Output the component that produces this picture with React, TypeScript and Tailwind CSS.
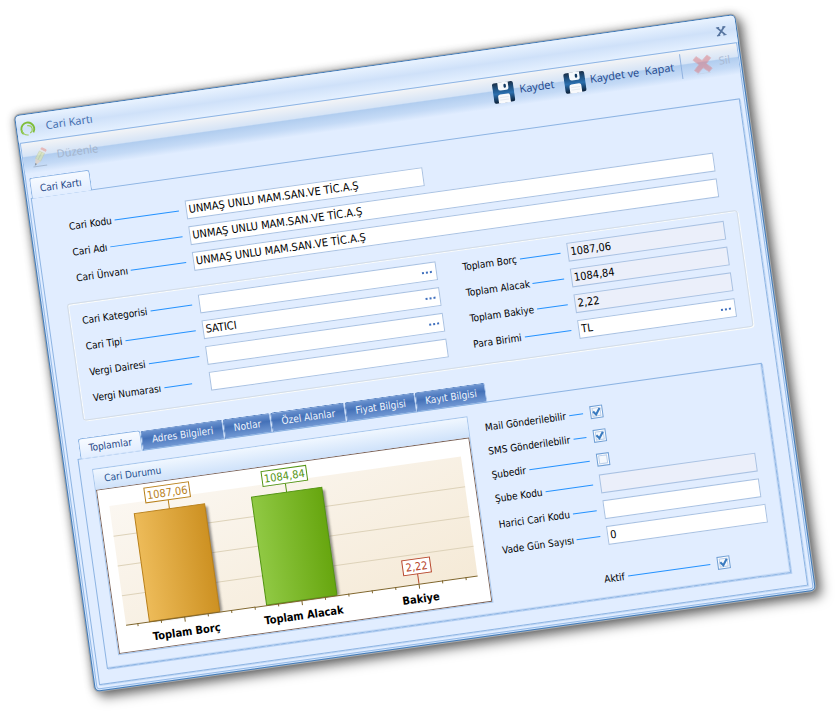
import React, { useId, useState } from "react";

const UI_FONT =
  "font-['DejaVu_Sans_Condensed','DejaVu_Sans',sans-serif]";
const CHROME_FONT = "font-['Open_Sans','Noto_Sans',sans-serif]";

function Leader({
  htmlFor,
  text,
  width,
  short = false,
}: {
  htmlFor: string;
  text: string;
  width: string;
  short?: boolean;
}) {
  return (
    <label
      htmlFor={htmlFor}
      className={`${width} flex h-[19px] shrink-0 items-center gap-[3px] text-[10px] leading-[14px] whitespace-nowrap text-black ${
        short ? "pr-[18px]" : "pr-[7px]"
      }`}
    >
      {text}
      <span className="h-px flex-1 bg-[#2492ff]" />
    </label>
  );
}

type FieldProps = {
  label: string;
  value?: string;
  labelWidth: string;
  boxWidth?: string;
  lookup?: boolean;
  readOnly?: boolean;
  short?: boolean;
};

function Field({
  label,
  value = "",
  labelWidth,
  boxWidth = "flex-1",
  lookup = false,
  readOnly = false,
  short = false,
}: FieldProps) {
  const id = useId();
  return (
    <div className="flex">
      <Leader htmlFor={id} text={label} width={labelWidth} short={short} />
      <div
        className={`${boxWidth} flex h-[19px] min-w-0 border border-[#a9c2e3] ${
          readOnly ? "bg-[#ebeffa]" : "bg-white"
        }`}
      >
        <input
          id={id}
          type="text"
          defaultValue={value}
          readOnly={readOnly}
          className="min-w-0 flex-1 bg-transparent px-[2px] text-[11px] leading-[15px] text-black outline-none"
        />
        {lookup && (
          <button
            type="button"
            aria-label={`${label} seç`}
            className="flex items-center gap-[2px] px-1"
          >
            <span className="size-[2px] bg-[#3f6fbd]" />
            <span className="size-[2px] bg-[#3f6fbd]" />
            <span className="size-[2px] bg-[#3f6fbd]" />
          </button>
        )}
      </div>
    </div>
  );
}

function Check({
  label,
  checked = false,
  labelWidth = "w-[106px]",
  className = "",
}: {
  label: string;
  checked?: boolean;
  labelWidth?: string;
  className?: string;
}) {
  const id = useId();
  return (
    <div className={`flex items-center ${className}`}>
      <Leader htmlFor={id} text={label} width={labelWidth} />
      <span className="grid size-[13px]">
        <input
          id={id}
          type="checkbox"
          defaultChecked={checked}
          className="peer col-start-1 row-start-1 size-[13px] appearance-none border border-[#6f9fd6] bg-[#f4f8fd] shadow-[inset_0_0_0_1px_#ffffff,inset_0_0_0_2px_#bcd0ea]"
        />
        <svg
          viewBox="0 0 13 13"
          className="pointer-events-none invisible col-start-1 row-start-1 size-[13px] peer-checked:visible"
        >
          <path d="M3.2 5.6 L5.8 9 L10 3.2" fill="none" stroke="#3a7bc0" strokeWidth="2.1" />
        </svg>
      </span>
    </div>
  );
}

function Floppy() {
  const id = useId();
  return (
    <svg viewBox="0 0 22 22" className="size-[22px]">
      <defs>
        <linearGradient id={id} x1="0" y1="0" x2="0" y2="1">
          <stop offset="0" stopColor="#1a2f48" />
          <stop offset="0.3" stopColor="#1f5486" />
          <stop offset="0.55" stopColor="#2b6fae" />
          <stop offset="1" stopColor="#0c2038" />
        </linearGradient>
      </defs>
      <path
        d="M2.500 1H19.500Q21.500 1 21.500 3V19.500Q21.500 21.500 19.500 21.500H2.500Q.5 21.500 .5 19.500V3Q.5 1 2.500 1z"
        fill={`url(#${id})`}
      />
      <path d="M6 .8h10.500v5.700Q16.500 9 14 9H8.500Q6 9 6 6.500z" fill="#f4f8fc" />
      <rect x="11.800" y="2.800" width="2.400" height="4" rx="1.200" fill="#123a63" />
      <path d="M5 22v-7Q5 12.800 7.200 12.800h7.600Q17 12.800 17 15v7z" fill="#f9fafc" />
      <path d="M6.500 16h9M6.500 18.500h9" stroke="#dde4ec" strokeWidth="0.7" />
    </svg>
  );
}

function Pencil() {
  return (
    <svg viewBox="0 0 18 20" className="h-5 w-[18px] opacity-60">
      <path d="M4.200 10.500 9.200 3.500l4.800 3.200L9 14z" fill="#dfe6a4" stroke="#b9c2a0" strokeWidth="0.6" />
      <path d="M6.500 12.200 11.600 5.100" stroke="#c3cf8a" strokeWidth="1" />
      <path d="M10.200 2 11.300.7q.7-.6 1.500-.1l3 2q.8.6.4 1.500L15.200 5.500z" fill="#ea9a92" />
      <path d="M9.700 2.700l5 3.400" stroke="#e9e6df" strokeWidth="1.400" />
      <path d="M4.200 10.500 9 14l-6 3.500z" fill="#f0d3b4" />
      <path d="M3.400 15l1.700 1.300-2.600 1.500z" fill="#5d6a78" />
      <path d="M1 18.600h14" stroke="#8fa2ba" strokeWidth="1" />
    </svg>
  );
}

function DeleteCross() {
  return (
    <svg viewBox="0 0 20 20" className="size-5 opacity-45">
      <path
        d="M4.500 1.500 10 6.300l5.500-4.800 3.500 3.300L13.800 10l5.200 5.200-3.500 3.300L10 13.700l-5.500 4.800L1 15.200 6.200 10 1 4.800z"
        fill="#e06a6c"
        stroke="#d98a8e"
        strokeWidth="0.8"
        strokeLinejoin="round"
      />
      <path d="M3 19.200h14" stroke="#b9c6d6" strokeWidth="0.700" />
    </svg>
  );
}

const bars = [
  { name: "Toplam Borç", value: "1087,06", h: 109, color: "#b9811c", fill: "url(#amber)", box: 45 },
  { name: "Toplam Alacak", value: "1084,84", h: 109, color: "#539413", fill: "url(#leaf)", box: 45 },
  { name: "Bakiye", value: "2,22", h: 0, color: "#b8482e", fill: "none", box: 28 },
];

function Chart() {
  const left = 11;
  const top = 18;
  const base = 138;
  const step = 355 / 3;
  return (
    <svg viewBox="0 0 377 166" className="block w-full" role="img" aria-label="Cari Durumu">
      <defs>
        <linearGradient id="plot" x1="0" y1="0" x2="1" y2="1">
          <stop offset="0" stopColor="#fbf7f1" />
          <stop offset="1" stopColor="#f5ead7" />
        </linearGradient>
        <linearGradient id="amber" x1="0" y1="0" x2="1" y2="0">
          <stop offset="0" stopColor="#edbb59" />
          <stop offset="1" stopColor="#cd9122" />
        </linearGradient>
        <linearGradient id="leaf" x1="0" y1="0" x2="1" y2="0">
          <stop offset="0" stopColor="#90c944" />
          <stop offset="1" stopColor="#67a60f" />
        </linearGradient>
        <filter id="soft" x="-20%" y="-20%" width="140%" height="140%">
          <feGaussianBlur stdDeviation="0.8" />
        </filter>
      </defs>
      <rect x="0.5" y="0.5" width="376" height="165" fill="#ffffff" stroke="#7e665c" />
      <rect x={left} y={top} width="355" height="120" fill="url(#plot)" />
      {[30, 60, 90].map((g) => (
        <path key={g} d={`M${left} ${top + g + 0.5}h355`} stroke="#ddd2b9" />
      ))}
      {bars.map((b, i) => {
        const cx = left + step * (i + 0.5);
        const y = base - b.h;
        const boxTop = b.h ? y - 24 : y - 25;
        return (
          <g key={b.name}>
            {b.h > 0 && (
              <>
                <rect x={cx - 32} y={y + 3} width="70" height={b.h - 3} fill="#4b4a48" opacity="0.6" filter="url(#soft)" />
                <rect x={cx - 35.5} y={y} width="71" height={b.h} fill={b.fill} stroke={b.color} strokeWidth="1" />
              </>
            )}
            <path d={`M${cx} ${boxTop + 15}V${y}`} stroke={b.color} />
            <rect x={cx - b.box / 2} y={boxTop} width={b.box} height="15" fill="#ffffff" stroke={b.color} />
            <text x={cx} y={boxTop + 11.5} textAnchor="middle" fill={b.color} className="text-[11px]">
              {b.value}
            </text>
            <text x={cx} y={157} textAnchor="middle" fill="#000000" className="text-[11px] font-bold">
              {b.name}
            </text>
          </g>
        );
      })}
      <path d={`M${left} ${base + 0.5}h355`} stroke="#80662c" />
      {Array.from({ length: 15 }, (_, i) => {
        const x = left + (step / 5) * (i + 0.5);
        return <path key={i} d={`M${x} ${base}v${i % 5 === 2 ? 5 : 3}`} stroke="#80662c" />;
      })}
    </svg>
  );
}

const tabs = [
  { name: "Toplamlar", width: "w-[63px]" },
  { name: "Adres Bilgileri", width: "w-[83px]" },
  { name: "Notlar", width: "w-12" },
  { name: "Özel Alanlar", width: "w-[75px]" },
  { name: "Fiyat Bilgisi", width: "w-[71px]" },
  { name: "Kayıt Bilgisi", width: "w-[71px]" },
];

export default function App() {
  const [active, setActive] = useState("Toplamlar");
  const company = "UNMAŞ UNLU MAM.SAN.VE TİC.A.Ş";

  return (
    <main className={`${UI_FONT} min-h-screen overflow-hidden bg-white pt-[62px] pr-[58px] pb-10 pl-[51px]`}>
      <section className="-rotate-8 rounded-[5px] border border-[#3f7ab9] bg-[#e1edff] shadow-[inset_0_0_0_1px_#d3e5fb,inset_0_0_0_2px_#93b9e8,0_0_0_1px_#a9abad,0_0_8px_1px_rgba(0,0,0,0.3),5px_6px_12px_1px_rgba(0,0,0,0.5)]">
        <header
          className={`${CHROME_FONT} flex h-[27px] items-center rounded-t-[4px] bg-linear-to-b from-[#e9f3ff] from-0% via-[#cfe1f9] via-50% to-[#e4f0ff] pr-[10px] pl-[3px] text-[11px] text-[#3d69ab]`}
        >
          <svg viewBox="0 0 16 16" className="mr-2.5 size-4">
            <path d="M12.8 12.4a6.500 6.500 0 1 0-9.800.4" fill="none" stroke="#7fbd3a" strokeWidth="1.900" />
            <path d="M1.500 8.500q.8 5.500 6.300 5.800M9.500 12.500q3-1.200 2.600-4.300Q11.500 4.800 7.500 5" fill="none" stroke="#9acb5c" strokeWidth="1.100" />
          </svg>
          <h1 className="flex-1">Cari Kartı</h1>
          <button type="button" aria-label="Kapat">
            <svg viewBox="0 0 10 10" className="size-2.5">
              <path d="M1.500 1l7 8M8.500 1l-7 8" stroke="#56749f" strokeWidth="1.700" />
              <path d="M0 1h3.500M6.500 1H10M0 9h3.500M6.500 9H10" stroke="#56749f" strokeWidth="1.100" />
            </svg>
          </button>
        </header>

        <div
          className={`${CHROME_FONT} mx-0.5 flex h-8 items-center border-t border-[#8db4e3] bg-[linear-gradient(to_bottom,#f3f4f6_0%,#d6e4f6_42%,#b1cdef_46%,#c4daf6_75%,#e1edff_100%)] pr-2 pl-2 text-[11px] text-[#23478b]`}
        >
          <button type="button" disabled className="flex items-center gap-2 text-[#a3b3cb]">
            <Pencil />
            Düzenle
          </button>
          <div className="ml-auto flex items-center">
            <button type="button" className="flex items-center gap-[5px]">
              <Floppy />
              Kaydet
            </button>
            <button type="button" className="ml-2.5 flex items-center gap-1 whitespace-pre">
              <Floppy />
              {"Kaydet ve  Kapat"}
            </button>
            <span className="mx-[7px] h-[25px] w-px bg-[#8fb1df]" />
            <button type="button" disabled className="ml-1 flex items-center gap-1.5 text-[#a9b9d2]">
              <DeleteCross />
              Sil
            </button>
          </div>
        </div>

        <div className="pt-[4px] pr-1.5 pb-[5px] pl-1">
          <div role="tablist" className="relative z-10 -mb-px flex pl-px">
            <button
              type="button"
              role="tab"
              aria-selected="true"
              className="h-[21px] w-[61px] rounded-t-[3px] border border-b-0 border-[#8db4e3] bg-linear-to-b from-[#f6faff] to-[#e1edff] text-[10px] text-[#1f4585]"
            >
              Cari Kartı
            </button>
          </div>

          <div className="border border-[#8db4e3] shadow-[1px_1px_0_#c3d9f5]">
            <form className="pt-[23px] pb-3.5">
              <div className="flex flex-col gap-[7px] px-[33px]">
                <Field label="Cari Kodu" value={company} labelWidth="w-[118px]" boxWidth="w-[240px]" />
                <Field label="Cari Adı" value={company} labelWidth="w-[118px]" />
                <Field label="Cari Ünvanı" value={company} labelWidth="w-[118px]" />
              </div>

              <fieldset className="mt-[15px] mr-[17px] ml-5 flex gap-[26px] rounded-[3px] border border-[#d3dce6] pt-2 pr-3.5 pb-[11px] pl-3 shadow-[inset_1px_1px_0_#fbfcfa,1px_1px_0_#fbfcfa]">
                <div className="flex w-[358px] flex-col gap-[7px]">
                  <Field label="Cari Kategorisi" labelWidth="w-[118px]" lookup />
                  <Field label="Cari Tipi" value="SATICI" labelWidth="w-[118px]" lookup />
                  <Field label="Vergi Dairesi" labelWidth="w-[118px]" lookup />
                  <Field label="Vergi Numarası" labelWidth="w-[118px]" short />
                </div>
                <div className="flex flex-1 flex-col gap-[7px]">
                  <Field label="Toplam Borç" value="1087,06" labelWidth="w-[106px]" readOnly />
                  <Field label="Toplam Alacak" value="1084,84" labelWidth="w-[106px]" readOnly />
                  <Field label="Toplam Bakiye" value="2,22" labelWidth="w-[106px]" readOnly />
                  <Field label="Para Birimi" value="TL" labelWidth="w-[106px]" lookup />
                </div>
              </fieldset>

              <div className="mt-[17px] mr-3.5 ml-[9px]">
                <div role="tablist" className="relative z-10 -mb-px flex items-end pl-[3px]">
                  {tabs.map((t) => (
                    <button
                      key={t.name}
                      type="button"
                      role="tab"
                      aria-selected={t.name === active}
                      onClick={() => setActive(t.name)}
                      className={`${t.width} rounded-t-[3px] border text-center text-[10px] leading-[14px] whitespace-nowrap ${
                        t.name === active
                          ? "h-[21px] border-[#8db4e3] border-b-[#e1edff] bg-linear-to-b from-[#f8fbff] to-[#e1edff] text-[#1f4585]"
                          : "h-5 border-[#5c86c4] border-r-[#a9c4ea] border-b-[#8db4e3] bg-linear-to-b from-[#6d94d0] via-[#4471b8] via-40% to-[#7299d4] text-[#f0f5fd]"
                      }`}
                    >
                      {t.name}
                    </button>
                  ))}
                </div>

                <div className="flex items-start gap-4 border border-[#8db4e3] pr-[18px] pl-3 shadow-[1px_1px_0_#b4cff2,inset_-1px_-1px_0_#c8dcf7]">
                  <section className="my-[11px] w-[379px] shrink-0 border border-[#a8c7ec]">
                    <h2 className="h-5 bg-linear-to-b from-[#f0f7ff] to-[#cfe2fa] pl-2.5 text-[10px] leading-5 text-[#24508f]">
                      Cari Durumu
                    </h2>
                    <Chart />
                  </section>

                  <div className="min-w-0 flex-1 pt-[15px]">
                    <div className="flex flex-col gap-[5px]">
                      <Check label="Mail Gönderilebilir" checked />
                      <Check label="SMS Gönderilebilir" checked />
                      <Check label="Şubedir" />
                    </div>
                    <div className="mt-[5px] flex flex-col gap-[7px]">
                      <Field label="Şube Kodu" labelWidth="w-[106px]" readOnly />
                      <Field label="Harici Cari Kodu" labelWidth="w-[106px]" />
                      <div className="-mr-[3px]">
                        <Field label="Vade Gün Sayısı" value="0" labelWidth="w-[106px]" />
                      </div>
                    </div>
                    <Check label="Aktif" checked labelWidth="w-[114px]" className="mt-6 ml-[97px]" />
                  </div>
                </div>
              </div>
            </form>
          </div>
        </div>
      </section>
    </main>
  );
}
